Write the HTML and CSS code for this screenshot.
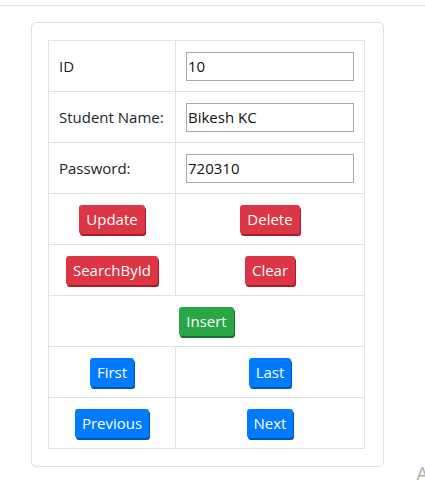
FILE: index.html
```html
<!DOCTYPE html>
<html>
<head>
<meta charset="utf-8">
<link rel="stylesheet" href="styles.css">
</head>
<body>
<div class="topline"></div>
<div class="page">
  <div class="card">
    <table class="grid">
      <tr>
        <td class="label">ID</td>
        <td class="field"><input class="inp" type="text" value="10"></td>
      </tr>
      <tr>
        <td class="label">Student Name:</td>
        <td class="field"><input class="inp" type="text" value="Bikesh KC"></td>
      </tr>
      <tr>
        <td class="label">Password:</td>
        <td class="field"><input class="inp" type="text" value="720310"></td>
      </tr>
      <tr>
        <td class="act"><button class="btn red">Update</button></td>
        <td class="act"><button class="btn red">Delete</button></td>
      </tr>
      <tr>
        <td class="act"><button class="btn red">SearchById</button></td>
        <td class="act"><button class="btn red">Clear</button></td>
      </tr>
      <tr>
        <td class="act" colspan="2"><button class="btn green">Insert</button></td>
      </tr>
      <tr>
        <td class="act"><button class="btn blue">First</button></td>
        <td class="act"><button class="btn blue">Last</button></td>
      </tr>
      <tr>
        <td class="act"><button class="btn blue">Previous</button></td>
        <td class="act"><button class="btn blue">Next</button></td>
      </tr>
    </table>
  </div>
  <div class="side">A</div>
</div>
</body>
</html>
```

FILE: styles.css
```css
html, body {
  margin: 0;
  padding: 0;
  background: #fff;
  overflow: hidden;
  height: 480px;
}
body {
  font-family: "Open Sans", "Noto Sans", sans-serif;
  font-size: 14px;
  color: #212529;
}
.topline {
  height: 5px;
  border-bottom: 1px solid #e3e3e3;
}
.page {
  display: flex;
  padding-top: 16px;
  padding-left: 31px;
}
.card {
  width: 319px;
  border: 1px solid #dcdfe3;
  border-radius: 5px;
  padding: 17px 16px 17px 16px;
  flex: none;
  align-self: flex-start;
}
.grid {
  border-collapse: collapse;
  width: 317px;
}
.grid td {
  border: 1px solid #dee2e6;
  height: 51px;
  padding: 0;
  box-sizing: border-box;
}
.label {
  width: 127px;
  padding-left: 10px !important;
  font-size: 15px;
}
.field {
  padding-left: 10px !important;
}
.inp {
  width: 168px;
  height: 29px;
  box-sizing: border-box;
  border: 1px solid #a9a9a9;
  padding: 0 1px;
  margin: 0;
  font-family: inherit;
  font-size: 15px;
  color: #111;
  display: block;
}
.act {
  text-align: center;
}
.btn {
  font-family: inherit;
  font-size: 15px;
  color: #fff;
  border: none;
  border-radius: 3px;
  height: 29px;
  padding: 0 7px;
  line-height: 29px;
  cursor: pointer;
  vertical-align: middle;
}
.red {
  background: #dc3545;
  box-shadow: 1px 2px 0 #a71d2a;
}
.green {
  background: #28a745;
  box-shadow: 1px 2px 0 #1a6e2e;
}
.blue {
  background: #007bff;
  box-shadow: 1px 2px 0 #0056b3;
}
.side {
  margin-top: 440px;
  margin-left: 32px;
  font-size: 20px;
  color: #b0b0b0;
  line-height: 24px;
}
```
